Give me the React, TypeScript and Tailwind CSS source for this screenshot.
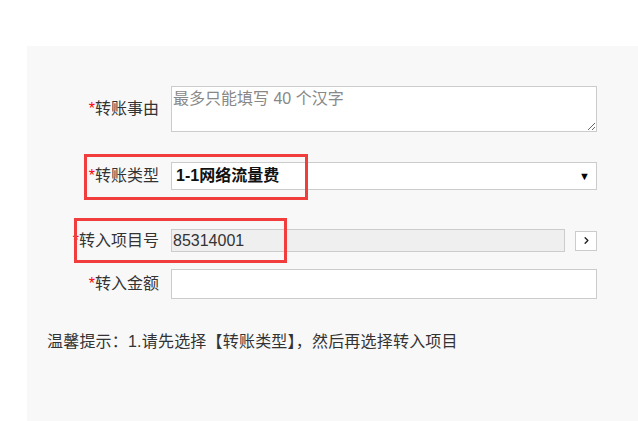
import { FiChevronRight } from "react-icons/fi";

const fontStack = "font-['Liberation_Sans','Noto_Sans_CJK_SC',sans-serif]";

const Label = ({ text }: { text: string }) => (
    <div className="w-[144px] shrink-0 pr-[12px] text-right text-[16px] leading-[20px] text-[#333]">
        <span className="text-[#f00]">*</span>
        {text}
    </div>
);

const App = () => {
    return (
        <div className={`relative flex h-[421px] w-[638px] flex-col bg-white pl-[27px] pt-[46px] ${fontStack}`}>
            <div className="flex-1 bg-[#f8f8f8] pt-[40px] pr-[41px]">
                {/* 转账事由 */}
                <div className="flex items-center">
                    <Label text="转账事由" />
                    <textarea
                        className="block h-[46px] flex-1 border border-[#ccc] bg-white px-[1px] py-[2px] text-[16px] leading-[20px] text-[#333] placeholder:text-[#888] outline-none"
                        placeholder="最多只能填写 40 个汉字"
                    />
                </div>

                {/* 转账类型 */}
                <div className="mt-[30px] flex items-center">
                    <Label text="转账类型" />
                    <div className="flex h-[28px] flex-1 items-center justify-between border border-[#ccc] bg-white pl-[4px] pr-[6px]">
                        <span className="text-[16px] font-bold text-[#111]">
                            1-1网络流量费
                        </span>
                        <span className="text-[11px] leading-none text-black">
                            ▼
                        </span>
                    </div>
                </div>

                {/* 转入项目号 */}
                <div className="mt-[39px] flex items-center">
                    <Label text="转入项目号" />
                    <div className="flex h-[23px] w-[394px] items-center border border-[#ccc] bg-[#efefef] pl-[1px] text-[16px] text-[#333]">
                        85314001
                    </div>
                    <button className="ml-[10px] flex h-[20px] w-[22px] items-center justify-center border border-[#ccc] bg-white text-[#222]">
                        <FiChevronRight className="text-[11px]" strokeWidth={3} />
                    </button>
                </div>

                {/* 转入金额 */}
                <div className="mt-[17px] flex items-center">
                    <Label text="转入金额" />
                    <input className="h-[30px] flex-1 border border-[#ccc] bg-white px-[2px] text-[16px] outline-none" />
                </div>

                <p className="mt-[31px] pl-[20px] text-[16px] leading-[24px] tracking-[0.2px] text-[#333]">
                    温馨提示：1.请先选择【转账类型】，然后再选择转入项目
                </p>
            </div>

            {/* Red highlight annotations */}
            <div className="absolute left-[84px] top-[154px] h-[46px] w-[224px] border-[3px] border-[#f23d3d]" />
            <div className="absolute left-[74px] top-[218px] h-[45px] w-[213px] border-[3px] border-[#f23d3d]" />
        </div>
    );
};

export default App;
